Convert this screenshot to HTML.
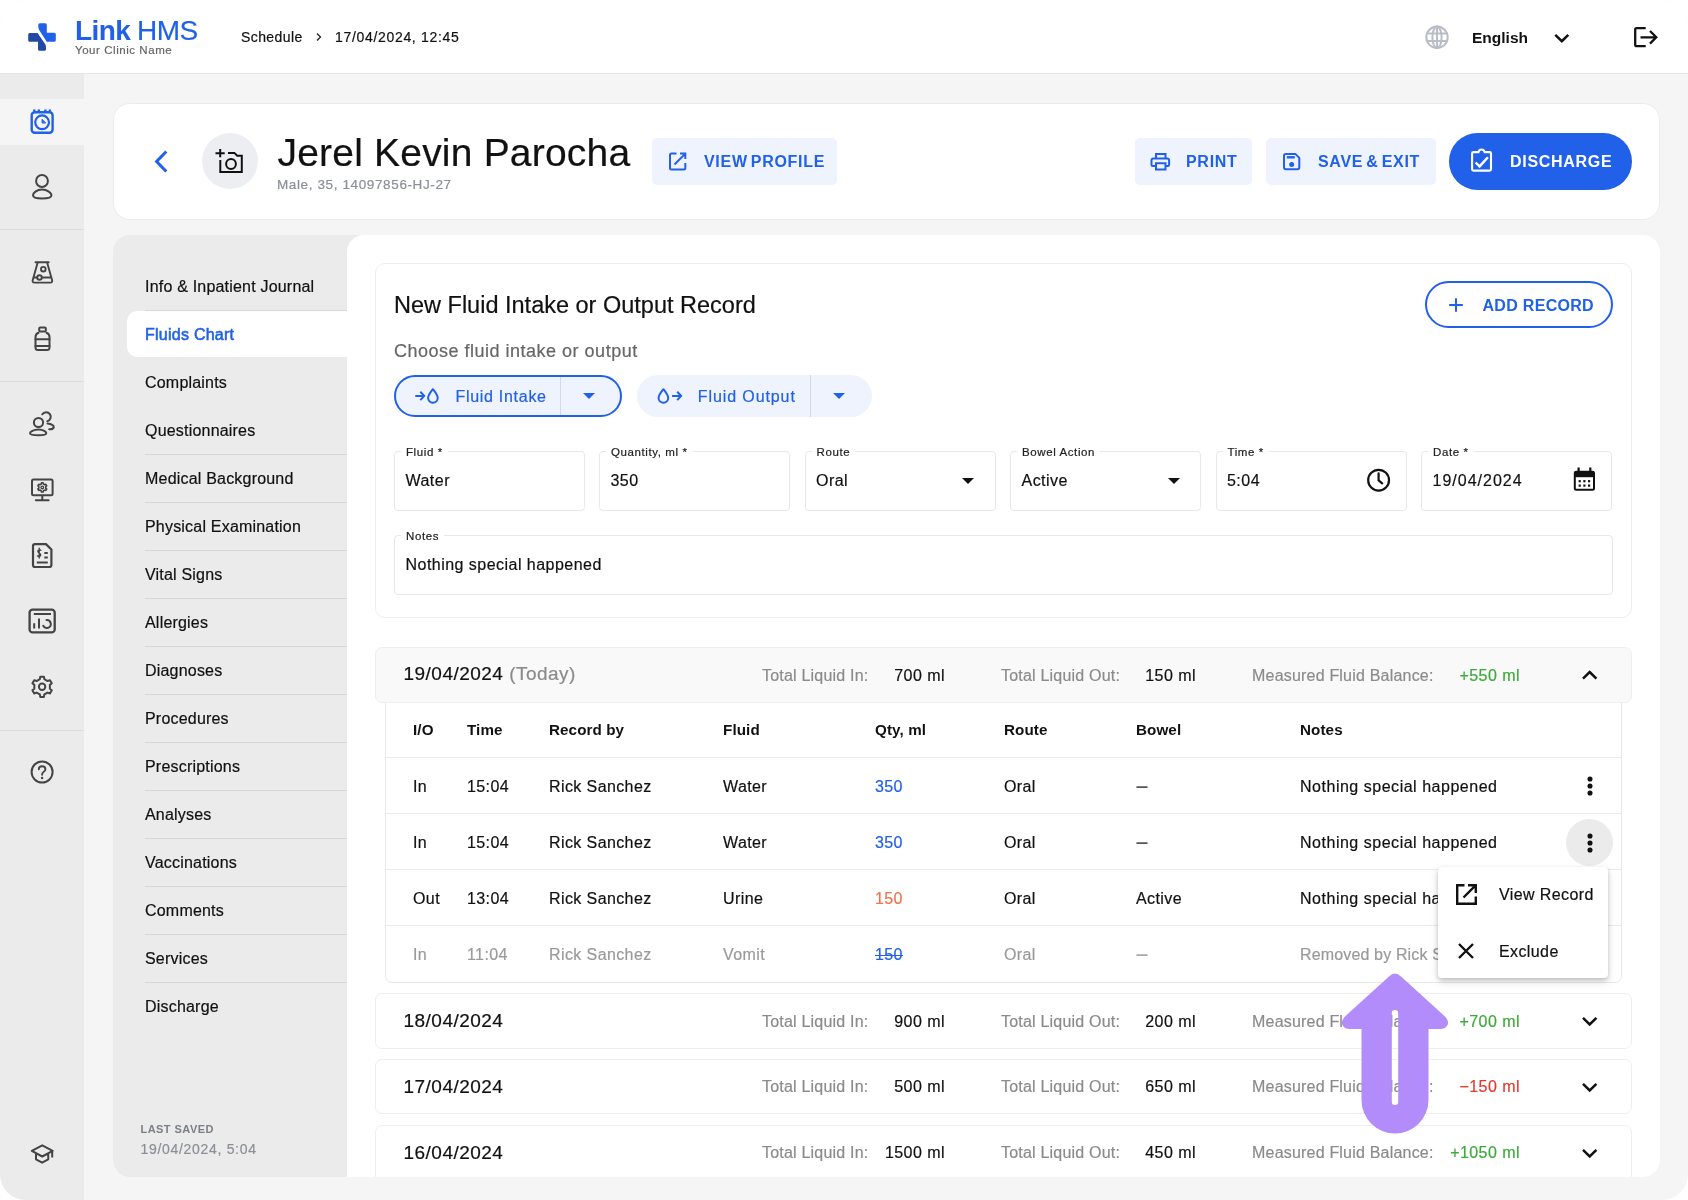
<!DOCTYPE html>
<html lang="en">
<head>
<meta charset="utf-8">
<title>Link HMS - Fluids Chart</title>
<style>
*{box-sizing:border-box;margin:0;padding:0}
html,body{width:1688px;height:1200px;overflow:hidden;background:#fff}
body{font-family:"Liberation Sans",sans-serif;color:#111;position:relative;-webkit-text-stroke:.2px}
#app{will-change:transform;position:absolute;left:0;top:0;width:1688px;height:1200px;background:#f5f5f5;border-radius:26px;overflow:hidden}
.abs{position:absolute}
.t{position:absolute;white-space:nowrap;line-height:20px}
svg{position:absolute;overflow:visible}
/* header */
#hdr{position:absolute;left:0;top:0;width:1688px;height:74px;background:#fff;border-bottom:1px solid #e6e6e6}
/* sidebar */
#side{position:absolute;left:0;top:74px;width:84px;height:1126px;background:#ebebeb}
#side .act{position:absolute;left:0;top:25px;width:84px;height:46px;background:#f5f5f5}
#side .sep{position:absolute;left:0;width:84px;height:1px;background:#d9dbe0}
/* patient card */
#pc{position:absolute;left:113px;top:103px;width:1547px;height:116.500px;background:#fff;border:1px solid #ececec;border-radius:17px}
.btn{position:absolute;height:47px;border-radius:5px;background:#eef3fd;color:#2160e8;font-weight:bold;font-size:16px;letter-spacing:.7px;word-spacing:-2px}
/* main */
#main{position:absolute;left:112.500px;top:234.500px;width:1547.500px;height:942.300px;background:#ebebeb;border-radius:17px;overflow:hidden}
#content{position:absolute;left:234.500px;top:0;width:1313px;height:943px;background:#fff;border-radius:17px 0 0 0}
.nav{position:absolute;left:32.500px;font-size:16px;line-height:20px;color:#111;white-space:nowrap;letter-spacing:.2px;margin-top:1.800px}
.nsep{position:absolute;left:32px;width:202px;height:1px;background:#d6d8de}

/* content (page coords) */
#ov{position:absolute;left:0;top:0;width:1688px;height:1200px}
.card{position:absolute;border:1px solid #eceef1;border-radius:10px;background:#fff}
.fld{position:absolute;height:60px;border:1px solid #e6e8ec;border-radius:4px;background:#fff}
.fld .lb{position:absolute;left:6px;top:-8px;padding:0 5px;background:#fff;font-size:11.5px;line-height:16px;color:#222;letter-spacing:.6px;white-space:nowrap}
.fld .v{position:absolute;left:10.500px;top:19.500px;font-size:16px;line-height:20px;color:#111;letter-spacing:.47px;white-space:nowrap}
.pill{position:absolute;height:42px;border-radius:21px;background:#eef3fd;color:#2160e8;font-size:16px}
.pill .dv{position:absolute;top:0;width:1px;height:100%;background:#d5d9e2}
.acc{position:absolute;left:375px;width:1257px;height:55.500px;border:1px solid #eceef1;border-radius:7px;background:#fff}
.acc .d{position:absolute;left:27.500px;top:16px;font-size:19px;line-height:22px;color:#111;letter-spacing:.48px;white-space:nowrap}
.acc .k{position:absolute;top:17.500px;font-size:16px;line-height:20px;color:#8b8b8b;white-space:nowrap;letter-spacing:.2px}
.acc .n{position:absolute;top:17.500px;font-size:16px;line-height:20px;color:#111;white-space:nowrap;text-align:right;letter-spacing:.45px;margin-right:0}
.g{color:#3daa3a !important}.r{color:#e5392d !important}
.row{position:absolute;left:386px;width:1234.500px;height:56px;border-top:1px solid #e9ebee;margin-top:-1.500px}
.row span{margin-left:2px;margin-top:1px}
.row span{position:absolute;top:18px;font-size:16px;line-height:20px;white-space:nowrap;color:#111;letter-spacing:.4px}
.row span:nth-child(8){letter-spacing:.52px}
.row i{display:inline-block;font-style:normal;font-weight:bold;transform:scaleX(1.35);transform-origin:0 50%;color:#555}
.row.x i{color:#aaa}
.row.h span{font-weight:bold;letter-spacing:.1px;font-size:15.2px}
.row.x span{color:#9a9a9a}
.row.x span:nth-child(8){letter-spacing:.15px}
[style*="font-weight:bold"],.btn,.row.h span{-webkit-text-stroke:0}
</style>
</head>
<body>
<div id="app">

<!-- HEADER -->
<div id="hdr">
  <svg style="left:22px;top:16px" width="40" height="40" viewBox="22 16 40 40">
    <path d="M38.300 24.700 Q38.300 23.200 39.800 23.200 H45.300 Q46.800 23.200 46.800 24.700 V32.700 H54.300 Q55.800 32.700 55.800 34.200 V40.200 Q55.800 41.700 54.300 41.700 H46.700 L39.500 30.500 Q38.300 28.600 38.300 26.500 Z" fill="#2160e8"/>
    <path d="M29.700 33 H37.600 L45.300 44.200 Q46 45.600 46 47.500 V49.200 Q46 50.700 44.500 50.700 H39.500 Q38 50.700 38 49.200 V41.700 H29.700 Q28.200 41.700 28.200 40.200 V34.500 Q28.200 33 29.700 33 Z" fill="#2249a4"/>
  </svg>
  <div class="t" style="left:75px;top:15px;font-size:28px;line-height:32px;color:#2160e8;font-weight:bold;letter-spacing:-.6px">Link</div>
  <div class="t" style="left:137px;top:15px;font-size:28px;line-height:32px;color:#2160e8;letter-spacing:-.5px">HMS</div>
  <div class="t" style="left:75px;top:43px;font-size:11.5px;line-height:14px;color:#666;letter-spacing:.55px">Your Clinic Name</div>
  <div class="t" style="left:241px;top:27px;font-size:14px;color:#111;letter-spacing:.4px">Schedule</div>
  <svg style="left:314px;top:32px" width="10" height="10" viewBox="0 0 10 10"><path d="M3 1.500 L6.500 5 L3 8.500" fill="none" stroke="#222" stroke-width="1.300"/></svg>
  <div class="t" style="left:335px;top:27px;font-size:14px;color:#111;letter-spacing:.68px">17/04/2024, 12:45</div>

  <svg style="left:1425px;top:25px" width="24" height="24" viewBox="0 0 24 24" fill="none" stroke="#b9bdc7" stroke-width="2">
    <circle cx="12" cy="12.300" r="10.700"/><ellipse cx="12" cy="12.300" rx="4.600" ry="10.700"/><path d="M2 8.500h20M2 16h20M12 1.500v21.500"/>
  </svg>
  <div class="t" style="left:1472px;top:28px;font-size:15.5px;font-weight:bold;color:#111">English</div>
  <svg style="left:1553px;top:32px" width="18" height="12" viewBox="0 0 18 12"><path d="M2.300 2.800 L8.800 9.200 L15.300 2.800" fill="none" stroke="#111" stroke-width="2.500"/></svg>
  <svg style="left:1632px;top:24px" width="28" height="26" viewBox="0 0 28 26" fill="none" stroke="#111" stroke-width="2.300">
    <path d="M13.700 4.100 H4.600 Q3.200 4.100 3.200 5.500 V20.700 Q3.200 22.100 4.600 22.100 H13.700"/><path d="M8.500 13.300 H24 M18 7 L24.300 13.300 L18 19.600"/>
  </svg>
</div>

<!-- SIDEBAR -->
<div id="side">
  <div class="act"></div>
  <div class="sep" style="top:155px"></div>
  <div class="sep" style="top:307px"></div>
  <div class="sep" style="top:656px"></div>
</div>

<!-- PATIENT CARD -->
<div id="pc">
  <svg style="left:38.700px;top:43.700px" width="16" height="26" viewBox="0 0 16 26"><path d="M13.300 3.500 L3.600 13.500 L13.300 23.500" fill="none" stroke="#2160e8" stroke-width="3"/></svg>
  <div class="abs" style="left:88px;top:29px;width:56px;height:56px;border-radius:28px;background:#eceef1"></div>
  <div class="t" style="left:163.500px;top:23.500px;font-size:39px;line-height:50px;color:#111;letter-spacing:.2px">Jerel Kevin Parocha</div>
  <div class="t" style="left:163px;top:72.500px;font-size:13.5px;line-height:16px;color:#8b8f97;letter-spacing:.62px">Male, 35, 14097856-HJ-27</div>
  <div class="btn" style="left:538px;top:34px;width:185px"><span class="t" style="left:52px;top:14.300px">VIEW PROFILE</span></div>
  <div class="btn" style="left:1021px;top:34px;width:117px"><span class="t" style="left:51px;top:14.300px">PRINT</span></div>
  <div class="btn" style="left:1152px;top:34px;width:170px"><span class="t" style="left:52px;top:14.300px">SAVE &amp; EXIT</span></div>
  <div class="btn" style="left:1335px;top:29px;width:183px;height:57px;border-radius:29px;background:#2160e8;color:#fff"><span class="t" style="left:61px;top:19.300px">DISCHARGE</span></div>
</div>

<!-- MAIN -->
<div id="main">
  <div class="abs" style="left:14px;top:76px;width:220px;height:46px;background:#fff;border-radius:10px 0 0 10px"></div>
  <div class="nav" style="top:41px">Info &amp; Inpatient Journal</div>
  <div class="nsep" style="top:75px"></div>
  <div class="nav" style="top:89px;color:#2160e8;font-size:16px;letter-spacing:.25px;-webkit-text-stroke:.55px #2160e8">Fluids Chart</div>
  <div class="nav" style="top:137px">Complaints</div>
  <div class="nav" style="top:185px">Questionnaires</div>
  <div class="nsep" style="top:219px"></div>
  <div class="nav" style="top:233px">Medical Background</div>
  <div class="nsep" style="top:267px"></div>
  <div class="nav" style="top:281px">Physical Examination</div>
  <div class="nsep" style="top:315px"></div>
  <div class="nav" style="top:329px">Vital Signs</div>
  <div class="nsep" style="top:363px"></div>
  <div class="nav" style="top:377px">Allergies</div>
  <div class="nsep" style="top:411px"></div>
  <div class="nav" style="top:425px">Diagnoses</div>
  <div class="nsep" style="top:459px"></div>
  <div class="nav" style="top:473px">Procedures</div>
  <div class="nsep" style="top:507px"></div>
  <div class="nav" style="top:521px">Prescriptions</div>
  <div class="nsep" style="top:555px"></div>
  <div class="nav" style="top:569px">Analyses</div>
  <div class="nsep" style="top:603px"></div>
  <div class="nav" style="top:617px">Vaccinations</div>
  <div class="nsep" style="top:651px"></div>
  <div class="nav" style="top:665px">Comments</div>
  <div class="nsep" style="top:699px"></div>
  <div class="nav" style="top:713px">Services</div>
  <div class="nsep" style="top:747px"></div>
  <div class="nav" style="top:761px">Discharge</div>
  <div class="t" style="left:28px;top:887.500px;font-size:11px;line-height:14px;color:#7b7f87;letter-spacing:.45px;font-weight:bold">LAST SAVED</div>
  <div class="t" style="left:28px;top:906px;font-size:14px;line-height:16px;color:#8b8f97;letter-spacing:.69px">19/04/2024, 5:04</div>
  <div id="content"></div>
</div>

<div id="ov">
<!-- sidebar icons -->
<svg style="left:0;top:0" width="84" height="1200" viewBox="0 0 84 1200" fill="none" stroke="#444" stroke-width="2" stroke-linejoin="round" stroke-linecap="round">
<g stroke="#2160e8" stroke-width="2.400"><rect x="31.700" y="112.200" width="20.900" height="20.600" rx="3"/><path d="M34.300 109.500v2M38.800 109.500v2M45.400 109.500v2M49.900 109.500v2" stroke-linecap="butt"/><circle cx="42.100" cy="122.300" r="6.900" stroke-width="2.200"/><path d="M42.100 122.700 V119.300 L45.400 122.700 Z" fill="#2160e8" stroke-width="1"/></g>
<circle cx="42" cy="181" r="5.900"/><path d="M42 189.500 C36.500 189.500 33 193.300 33 195.300 C33 197.700 37.500 198.500 42 198.500 C46.500 198.500 51.500 197.700 51.500 195.300 C51.500 193.300 47.500 189.500 42 189.500 Z"/>
<g stroke-width="1.900"><path d="M35.500 262.200 H48.700"/><path d="M37.600 262.800 L32.700 280.300 Q32.100 282.600 34.500 282.600 H50.300 Q52.700 282.600 52.100 280.300 L47.200 262.800"/><path d="M33.800 277.500 H37.200 M41.800 277.500 H51.200"/><circle cx="39.500" cy="277.500" r="2.300"/><circle cx="43.300" cy="269.200" r="2.300"/></g>
<rect x="39.200" y="327.500" width="6.600" height="4" rx="1"/><path d="M38.500 332.800 Q35.500 334 35.500 337 V347.500 Q35.500 350 38 350 H47 Q49.500 350 49.500 347.500 V337 Q49.500 334 46.500 332.800"/><path d="M35.500 339.200 H49.500 M35.500 346 H49.500"/>
<circle cx="38.500" cy="422.500" r="4.600"/><path d="M38.500 429.500 C33.500 429.500 30 432 30 433.300 C30 435 34.500 435.300 38.500 435.300 C42.500 435.300 46.300 435 46.300 433.300 C46.300 432 43.500 429.500 38.500 429.500 Z"/><path d="M42.300 414.300 A4.600 4.600 0 1 1 47.300 421.300"/><path d="M47.500 423.500 C51.500 423.800 54 425.500 53.800 427 C53.600 428.700 51 429.300 49.200 429.200"/>
<rect x="32" y="479.500" width="20.600" height="15.700" rx="1.500"/><path d="M42.300 496 V500.200 M35.800 500.200 H48.600"/>
<path d="M41.30 483.94 L41.47 482.77 L43.13 482.77 L43.30 483.94 L44.79 484.80 L45.89 484.37 L46.72 485.81 L45.80 486.54 L45.80 488.26 L46.72 488.99 L45.89 490.43 L44.79 490.00 L43.30 490.86 L43.13 492.03 L41.47 492.03 L41.30 490.86 L39.81 490.00 L38.71 490.43 L37.88 488.99 L38.80 488.26 L38.80 486.54 L37.88 485.81 L38.71 484.37 L39.81 484.80 Z" stroke-width="1.600"/><circle cx="42.300" cy="487.400" r="1.300" stroke-width="1.400"/>
<path d="M35 544.100 H46 L51.400 549.500 V565 Q51.400 567 49.400 567 H35 Q33 567 33 565 V546.100 Q33 544.100 35 544.100 Z" stroke-width="2.200"/><path d="M44.300 553 H47.800 M44.300 557.500 H47.800 M36.800 562.500 H47.800" stroke-width="1.800" stroke-linecap="butt"/><path d="M40.800 550.300 Q39.500 549.300 38.300 550.300 Q37.300 551.500 38.800 552.700 L39.800 553.500 Q41.300 554.700 40.300 555.900 Q39 556.900 37.500 555.900 M39.200 548.300 V558" stroke-width="1.400"/>
<rect x="29.600" y="609.600" width="25.100" height="22.800" rx="3" stroke-width="2.300"/><path d="M33.800 613.900 H51 M34.200 623.300 V628.500 M39 618.500 V628.500" stroke-linecap="butt"/><path d="M46.500 620 A4 4 0 1 1 43.200 625.800"/>
<path d="M39.87 679.12 L40.28 676.66 L43.92 676.66 L44.33 679.12 L47.64 681.03 L49.97 680.15 L51.79 683.31 L49.87 684.89 L49.87 688.71 L51.79 690.29 L49.97 693.45 L47.64 692.57 L44.33 694.48 L43.92 696.94 L40.28 696.94 L39.87 694.48 L36.56 692.57 L34.23 693.45 L32.41 690.29 L34.33 688.71 L34.33 684.89 L32.41 683.31 L34.23 680.15 L36.56 681.03 Z" stroke-linejoin="round"/><circle cx="42.100" cy="686.800" r="3.200"/>
<circle cx="42.100" cy="772" r="10.500"/><path d="M38.800 769.300 Q38.800 766.300 42.100 766.300 Q45.400 766.300 45.400 769.200 Q45.400 771 43.500 772 Q42.100 772.800 42.100 774.800" stroke-width="1.900"/><circle cx="42.100" cy="778" r="1.200" fill="#444" stroke="none"/>
<path d="M42.250 1145.300 L52.700 1150.900 L42.250 1156.500 L31.800 1150.900 Z M36 1153.500 V1159.300 L42.100 1162.700 L48.250 1159.300 V1153.500 M52.200 1151.500 V1157.500" stroke-linecap="butt"/>
</svg>
<div class="card" style="left:375px;top:263px;width:1257px;height:355px"></div>
<div class="t" style="left:394px;top:290px;font-size:23.5px;line-height:30px;color:#111">New Fluid Intake or Output Record</div>
<div class="t" style="left:394px;top:339px;font-size:18px;line-height:24px;color:#666;letter-spacing:.5px">Choose fluid intake or output</div>
<div class="abs" style="left:1425px;top:281px;width:188px;height:47px;border:2px solid #2160e8;border-radius:24px;background:#fff"></div>
<svg style="left:1447.800px;top:296.500px" width="16" height="16" viewBox="0 0 16 16"><path d="M8 1.200v13.600M1.200 8h13.600" stroke="#2160e8" stroke-width="2" fill="none"/></svg>
<div class="t" style="left:1482.500px;top:295.500px;font-size:16px;font-weight:bold;color:#2160e8;letter-spacing:.3px;word-spacing:0">ADD RECORD</div>
<div class="pill" style="left:394px;top:375px;width:228px;border:2px solid #2160e8"><div class="dv" style="left:164px"></div><span class="t" style="left:59.400px;top:9.500px;letter-spacing:.72px">Fluid Intake</span></div>
<div class="pill" style="left:637px;top:375px;width:235px"><div class="dv" style="left:173px"></div><span class="t" style="left:60.800px;top:11.500px;letter-spacing:.9px">Fluid Output</span></div>
<svg style="left:583px;top:393px" width="12" height="6" viewBox="0 0 12 6"><path d="M0 0h12l-6 6z" fill="#2160e8"/></svg>
<svg style="left:833px;top:393px" width="12" height="6" viewBox="0 0 12 6"><path d="M0 0h12l-6 6z" fill="#2160e8"/></svg>
<div class="fld" style="left:394px;top:450.500px;width:191px"><span class="lb">Fluid *</span><span class="v">Water</span></div>
<div class="fld" style="left:599px;top:450.500px;width:191px"><span class="lb">Quantity, ml *</span><span class="v">350</span></div>
<div class="fld" style="left:804.5px;top:450.500px;width:191px"><span class="lb">Route</span><span class="v">Oral</span></div>
<div class="fld" style="left:1010px;top:450.500px;width:191px"><span class="lb">Bowel Action</span><span class="v">Active</span></div>
<div class="fld" style="left:1215.5px;top:450.500px;width:191px"><span class="lb">Time *</span><span class="v">5:04</span></div>
<div class="fld" style="left:1421px;top:450.500px;width:191px"><span class="lb">Date *</span><span class="v" style="letter-spacing:1px">19/04/2024</span></div>
<div class="fld" style="left:394px;top:534.800px;width:1218.500px"><span class="lb">Notes</span><span class="v">Nothing special happened</span></div>
<svg style="left:962px;top:478px" width="12" height="6" viewBox="0 0 12 6"><path d="M0 0h12l-6 6z" fill="#111"/></svg>
<svg style="left:1168px;top:478px" width="12" height="6" viewBox="0 0 12 6"><path d="M0 0h12l-6 6z" fill="#111"/></svg>
<div class="abs" style="left:385px;top:690px;width:1236.500px;height:292.500px;border:1px solid #e8e8e8;border-radius:0 0 7px 7px;background:#fff"></div>
<div class="acc" style="top:647px;background:#f9f9f9;border-color:#eceef1;"><span class="d" style="top:15.200px">19/04/2024 <span style="color:#8b8b8b">(Today)</span></span><span class="k" style="left:386px">Total Liquid In:</span><span class="n" style="right:686px">700 ml</span><span class="k" style="left:625px">Total Liquid Out:</span><span class="n" style="right:435px">150 ml</span><span class="k" style="left:876px">Measured Fluid Balance:</span><span class="n g" style="right:111px">+550 ml</span></div>
<svg style="left:1581px;top:668px" width="16" height="12" viewBox="0 0 16 12"><path d="M2 10.700 L8.700 4.100 L15.400 10.700" fill="none" stroke="#111" stroke-width="2.500"/></svg>
<div class="row h" style="top:702px;border-top:none"><span style="left:25px">I/O</span><span style="left:79px">Time</span><span style="left:161px">Record by</span><span style="left:335px">Fluid</span><span style="left:487px">Qty, ml</span><span style="left:616px">Route</span><span style="left:748px">Bowel</span><span style="left:912px">Notes</span></div>
<div class="row" style="top:758px"><span style="left:25px">In</span><span style="left:79px">15:04</span><span style="left:161px">Rick Sanchez</span><span style="left:335px">Water</span><span style="left:487px;color:#2160e8">350</span><span style="left:616px">Oral</span><span style="left:748px"><i>–</i></span><span style="left:912px">Nothing special happened</span></div>
<div class="row" style="top:814px"><span style="left:25px">In</span><span style="left:79px">15:04</span><span style="left:161px">Rick Sanchez</span><span style="left:335px">Water</span><span style="left:487px;color:#2160e8">350</span><span style="left:616px">Oral</span><span style="left:748px"><i>–</i></span><span style="left:912px">Nothing special happened</span></div>
<div class="row" style="top:870px"><span style="left:25px">Out</span><span style="left:79px">13:04</span><span style="left:161px">Rick Sanchez</span><span style="left:335px">Urine</span><span style="left:487px;color:#f0714a">150</span><span style="left:616px">Oral</span><span style="left:748px">Active</span><span style="left:912px">Nothing special happened</span></div>
<div class="row x" style="top:926px"><span style="left:25px">In</span><span style="left:79px">11:04</span><span style="left:161px">Rick Sanchez</span><span style="left:335px">Vomit</span><span style="left:487px;color:#2160e8;text-decoration:line-through">150</span><span style="left:616px">Oral</span><span style="left:748px"><i>–</i></span><span style="left:912px">Removed by Rick Sanchez</span></div>
<div class="acc" style="top:993.200px;"><span class="d">18/04/2024</span><span class="k" style="left:386px">Total Liquid In:</span><span class="n" style="right:686px">900 ml</span><span class="k" style="left:625px">Total Liquid Out:</span><span class="n" style="right:435px">200 ml</span><span class="k" style="left:876px">Measured Fluid Balance:</span><span class="n g" style="right:111px">+700 ml</span></div>
<svg style="left:1581px;top:1014px" width="16" height="12" viewBox="0 0 16 12"><path d="M2 3.800 L8.700 10.400 L15.400 3.800" fill="none" stroke="#111" stroke-width="2.500"/></svg>
<div class="acc" style="top:1058.800px;"><span class="d">17/04/2024</span><span class="k" style="left:386px">Total Liquid In:</span><span class="n" style="right:686px">500 ml</span><span class="k" style="left:625px">Total Liquid Out:</span><span class="n" style="right:435px">650 ml</span><span class="k" style="left:876px">Measured Fluid Balance:</span><span class="n r" style="right:111px">−150 ml</span></div>
<svg style="left:1581px;top:1080px" width="16" height="12" viewBox="0 0 16 12"><path d="M2 3.800 L8.700 10.400 L15.400 3.800" fill="none" stroke="#111" stroke-width="2.500"/></svg>
<div class="acc" style="top:1124.600px;height:70px;clip-path:inset(0 0 17.800px 0)"><span class="d">16/04/2024</span><span class="k" style="left:386px">Total Liquid In:</span><span class="n" style="right:686px">1500 ml</span><span class="k" style="left:625px">Total Liquid Out:</span><span class="n" style="right:435px">450 ml</span><span class="k" style="left:876px">Measured Fluid Balance:</span><span class="n g" style="right:111px">+1050 ml</span></div>
<svg style="left:1581px;top:1146px" width="16" height="12" viewBox="0 0 16 12"><path d="M2 3.800 L8.700 10.400 L15.400 3.800" fill="none" stroke="#111" stroke-width="2.500"/></svg>
<!-- card icons -->
<svg style="left:1364px;top:466px" width="30" height="30" viewBox="1364 466 30 30" fill="none" stroke="#111" stroke-width="2.200"><circle cx="1378.600" cy="480.200" r="10.400"/><path d="M1378.600 473.400 V480.400 L1382.200 483.400" stroke-linecap="round" stroke-linejoin="round"/></svg>
<svg style="left:1570px;top:464px" width="30" height="30" viewBox="1570 464 30 30" ><rect x="1574.800" y="471.800" width="19.200" height="18" rx="1.500" fill="none" stroke="#111" stroke-width="2"/><rect x="1574.800" y="471" width="19.200" height="6.200" fill="#111"/><path d="M1578.600 467.400 V472 M1590.300 467.400 V472" stroke="#111" stroke-width="2.200"/><g fill="#111"><rect x="1578.6" y="480.1" width="2.200" height="2.200"/><rect x="1583.3" y="480.1" width="2.200" height="2.200"/><rect x="1588.0" y="480.1" width="2.200" height="2.200"/><rect x="1578.6" y="484.5" width="2.200" height="2.200"/><rect x="1583.3" y="484.5" width="2.200" height="2.200"/><rect x="1588.0" y="484.5" width="2.200" height="2.200"/></g></svg>
<svg style="left:410px;top:384px" width="34" height="24" viewBox="410 384 34 24" fill="none" stroke="#2160e8" stroke-width="2" stroke-linejoin="round"><path d="M415.3 395.900 H423.9 M420.29999999999995 391.700 L424.29999999999995 395.900 L420.29999999999995 400.100"/><path d="M432.9 389.200 C434.7 391.600 437.7 395 437.7 398 A4.800 4.800 0 0 1 428.09999999999997 398 C428.09999999999997 395 431.09999999999997 391.600 432.9 389.200 Z"/></svg>
<svg style="left:652px;top:384px" width="34" height="24" viewBox="652 384 34 24" fill="none" stroke="#2160e8" stroke-width="2" stroke-linejoin="round"><path d="M663.4 389.200 C665.1999999999999 391.600 668.1999999999999 395 668.1999999999999 398 A4.800 4.800 0 0 1 658.6 398 C658.6 395 661.6 391.600 663.4 389.200 Z"/><path d="M672.1 395.900 H680.8 M677.1999999999999 391.700 L681.1999999999999 395.900 L677.1999999999999 400.100"/></svg>
<svg style="left:210px;top:145px" width="40" height="32" viewBox="210 145 40 32" fill="none" stroke="#111" stroke-width="2"><path d="M215.500 153.300 H224.700 M220.200 148.900 V157.300"/><path d="M220.300 160 V172.100 H241.800 V155.700 H237.200 L234.400 152.900 H228"/><circle cx="231" cy="164" r="4.900"/></svg>
<svg style="left:665px;top:148px" width="26" height="26" viewBox="665 148 26 26" fill="none" stroke="#2160e8" stroke-width="2"><path d="M676.500 153.600 H671.500 Q670 153.600 670 155.100 V167.900 Q670 169.400 671.500 169.400 H683.800 Q685.300 169.400 685.300 167.900 V163"/><path d="M680 153.600 H685.300 V159 M685.300 153.600 L674.500 164.500"/></svg>
<svg style="left:1146px;top:150px" width="28" height="24" viewBox="1146 150 28 24" fill="none" stroke="#2160e8" stroke-width="2"><path d="M1156 158 V154 H1165.500 V158"/><path d="M1155.500 166 H1153 Q1151.500 166 1151.500 164.500 V160.500 Q1151.500 158.600 1153.400 158.600 H1167.200 Q1169.100 158.600 1169.100 160.500 V164.500 Q1169.100 166 1167.600 166 H1165.500"/><path d="M1156 163.200 H1165.500 V169.600 H1156 Z"/></svg>
<svg style="left:1279px;top:149px" width="26" height="26" viewBox="1279 149 26 26" fill="none" stroke="#2160e8" stroke-width="2"><path d="M1286 153.900 H1295.300 L1299.300 157.900 V167.200 Q1299.300 169.200 1297.300 169.200 H1286 Q1284 169.200 1284 167.200 V155.900 Q1284 153.900 1286 153.900 Z"/><path d="M1286.800 157.300 H1294.800" stroke-width="2.400"/><circle cx="1291.700" cy="164.500" r="2.500" fill="#2160e8" stroke="none"/></svg>
<svg style="left:1466px;top:144px" width="32" height="32" viewBox="1466 144 32 32" fill="none" stroke="#fff" stroke-width="2.100"><path d="M1478.500 152.100 H1473.400 Q1472.100 152.100 1472.100 153.400 V169.300 Q1472.100 170.600 1473.400 170.600 H1489.700 Q1491 170.600 1491 169.300 V153.400 Q1491 152.100 1489.700 152.100 H1484.600 Q1484 149.500 1481.550 149.500 Q1479.100 149.500 1478.500 152.100 Z"/><path d="M1475.600 162.500 L1479.600 166.400 L1487.900 157.200" stroke-width="2.400"/></svg>
<div class="abs" style="left:1566.200px;top:819px;width:47px;height:47px;border-radius:24px;background:#ebebeb"></div>
<svg style="left:1585.500px;top:775.4px" width="8" height="22" viewBox="0 0 8 22" fill="#111"><circle cx="4" cy="4" r="2.550"/><circle cx="4" cy="11" r="2.550"/><circle cx="4" cy="18" r="2.550"/></svg>
<svg style="left:1585.500px;top:831.6px" width="8" height="22" viewBox="0 0 8 22" fill="#111"><circle cx="4" cy="4" r="2.550"/><circle cx="4" cy="11" r="2.550"/><circle cx="4" cy="18" r="2.550"/></svg>
<div class="abs" style="left:1438px;top:867px;width:170px;height:111px;border-radius:4px;background:#fff;box-shadow:0 2px 4px rgba(0,0,0,.18),0 4px 10px rgba(0,0,0,.12)"></div>
<svg style="left:1455px;top:883px" width="23" height="23" viewBox="0 0 23 23" fill="none" stroke="#111" stroke-width="2.400"><path d="M9.500 2.200 H2.200 V20.800 H20.800 V13.500"/><path d="M13 2.200 H20.800 V10 M20.800 2.200 L8.500 14.500"/></svg>
<div class="t" style="left:1499px;top:885px;font-size:16px;color:#111;letter-spacing:.4px">View Record</div>
<svg style="left:1458px;top:943px" width="16" height="16" viewBox="0 0 16 16"><path d="M1 1 L15 15 M15 1 L1 15" stroke="#111" stroke-width="2.400" fill="none"/></svg>
<div class="t" style="left:1499px;top:941.500px;font-size:16px;color:#111;letter-spacing:.4px">Exclude</div>
<svg style="left:1330px;top:960px" width="130" height="180" viewBox="1330 960 130 180"><path fill-rule="evenodd" fill="#b18cfa" d="M1389 976.500 Q1395 970.500 1401 976.500 L1444.500 1016 Q1450 1021.500 1447 1026 Q1445 1029 1440 1029 H1428.500 V1100 A33.500 33.500 0 0 1 1361.500 1100 V1029 H1350 Q1345 1029 1343 1026 Q1340 1021.500 1345.500 1016 Z M1395 1010 A3.200 3.200 0 0 0 1391.800 1013.200 V1101.800 A3.200 3.200 0 0 0 1398.200 1101.800 V1013.200 A3.200 3.200 0 0 0 1395 1010 Z"/></svg>
</div>

</div>
</body>
</html>
